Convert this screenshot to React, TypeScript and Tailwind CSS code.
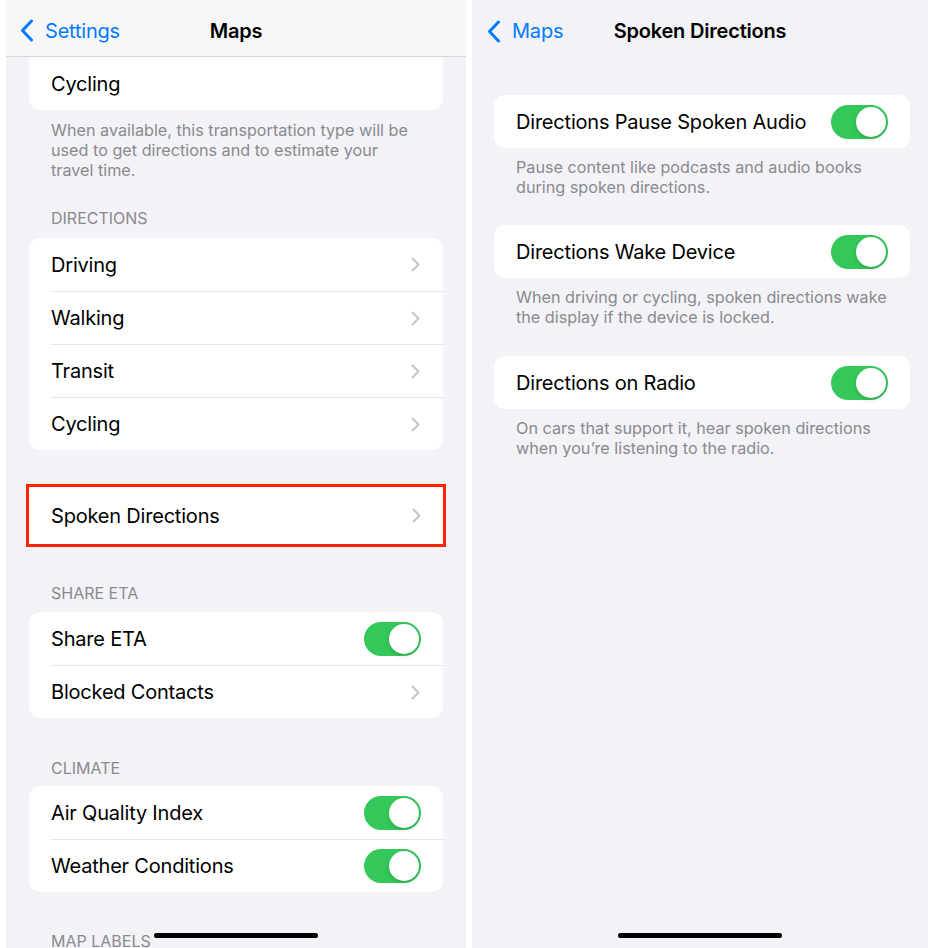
const font = { fontFamily: "Inter, 'Noto Sans', sans-serif" };

function Chevron() {
  return (
    <svg width="9" height="15" viewBox="0 0 9 15" fill="none" className="shrink-0">
      <path d="M1.5 1.5L7.5 7.5L1.5 13.5" stroke="#c4c4c7" strokeWidth="2" strokeLinecap="round" strokeLinejoin="round" />
    </svg>
  );
}

function BackChevron() {
  return (
    <svg width="14" height="23" viewBox="0 0 14 23" fill="none" className="shrink-0">
      <path d="M11.5 2L2.5 11.5L11.5 21" stroke="#007aff" strokeWidth="3" strokeLinecap="round" strokeLinejoin="round" />
    </svg>
  );
}

function Toggle() {
  return (
    <div className="flex h-[34px] w-[57px] shrink-0 items-center justify-end rounded-full bg-[#34c759] px-[2px]">
      <div className="h-[30px] w-[30px] rounded-full bg-white shadow-[0_2px_4px_rgba(0,0,0,0.15)]" />
    </div>
  );
}

type Row = { label: string; kind: "chevron" | "toggle" | "none" };

function Card({ rows, className = "" }: { rows: Row[]; className?: string }) {
  return (
    <div className={`overflow-hidden rounded-[11px] bg-white ${className}`}>
      {rows.map((r, i) => (
        <div key={r.label} className="pl-[22px]">
          <div
            className={`flex h-[53px] items-center justify-between pr-[22px] ${
              i > 0 ? "border-t border-[#e3e3e6]" : ""
            }`}
          >
            <span className="text-[20px] tracking-[-0.2px] text-black">{r.label}</span>
            {r.kind === "chevron" && (
              <span className="pr-[1px]">
                <Chevron />
              </span>
            )}
            {r.kind === "toggle" && <Toggle />}
          </div>
        </div>
      ))}
    </div>
  );
}

function Header({ text, className = "" }: { text: string; className?: string }) {
  return <div className={`px-[45px] text-[16px] leading-[20px] text-[#8a8a8e] ${className}`}>{text}</div>;
}

function Footer({ children, className = "" }: { children: React.ReactNode; className?: string }) {
  return <div className={`text-[16.2px] leading-[20px] text-[#8a8a8e] ${className}`}>{children}</div>;
}

function HomeBar() {
  return (
    <div className="absolute bottom-[10px] left-0 right-0 flex justify-center">
      <div className="h-[5px] w-[164px] rounded-full bg-black" />
    </div>
  );
}

function MapsScreen() {
  return (
    <div className="relative h-[948px] w-[460px] shrink-0 overflow-hidden bg-[#f2f2f7]">
      <div className="relative flex h-[57px] items-center border-b border-[#d6d6d9] bg-[#f7f7f8] pt-[5px]">
        <div className="flex items-center gap-[11px] pl-[14px]">
          <BackChevron />
          <span className="text-[20px] tracking-[-0.2px] text-[#007aff]">Settings</span>
        </div>
        <div className="absolute inset-0 flex items-center justify-center pt-[5px]">
          <span className="text-[20px] font-semibold tracking-[-0.2px] text-black">Maps</span>
        </div>
      </div>

      <div className="mx-[23px] flex h-[53px] items-center rounded-b-[11px] bg-white pl-[22px]">
        <span className="text-[20px] tracking-[-0.2px] text-black">Cycling</span>
      </div>
      <Footer className="px-[45px] pt-[10px]">
        When available, this transportation type will be used to get directions and to estimate your travel time.
      </Footer>

      <Header text="DIRECTIONS" className="mt-[28px]" />
      <Card
        className="mx-[23px] mt-[10px]"
        rows={[
          { label: "Driving", kind: "chevron" },
          { label: "Walking", kind: "chevron" },
          { label: "Transit", kind: "chevron" },
          { label: "Cycling", kind: "chevron" },
        ]}
      />

      <div className="mx-[20px] mt-[34px] flex h-[63px] items-center justify-between border-[3px] border-[#ff2200] bg-white pl-[22px] pr-[22px]">
        <span className="text-[20px] tracking-[-0.2px] text-black">Spoken Directions</span>
        <Chevron />
      </div>

      <Header text="SHARE ETA" className="mt-[36px]" />
      <Card
        className="mx-[23px] mt-[9px]"
        rows={[
          { label: "Share ETA", kind: "toggle" },
          { label: "Blocked Contacts", kind: "chevron" },
        ]}
      />

      <Header text="CLIMATE" className="mt-[40px]" />
      <Card
        className="mx-[23px] mt-[8px]"
        rows={[
          { label: "Air Quality Index", kind: "toggle" },
          { label: "Weather Conditions", kind: "toggle" },
        ]}
      />

      <Header text="MAP LABELS" className="mt-[39px]" />
      <HomeBar />
    </div>
  );
}

function SpokenScreen() {
  return (
    <div className="relative h-[948px] w-[456px] shrink-0 overflow-hidden bg-[#f2f2f7]">
      <div className="relative flex h-[57px] items-center pt-[5px]">
        <div className="flex items-center gap-[11px] pl-[15px]">
          <BackChevron />
          <span className="text-[20px] tracking-[-0.2px] text-[#007aff]">Maps</span>
        </div>
        <div className="absolute inset-0 flex items-center justify-center pt-[5px]">
          <span className="text-[20px] font-semibold tracking-[-0.2px] text-black">Spoken Directions</span>
        </div>
      </div>

      <Card className="ml-[22px] mr-[18px] mt-[38px]" rows={[{ label: "Directions Pause Spoken Audio", kind: "toggle" }]} />
      <Footer className="pl-[44px] pr-[40px] pt-[9px]">
        Pause content like podcasts and audio books during spoken directions.
      </Footer>

      <Card className="ml-[22px] mr-[18px] mt-[28px]" rows={[{ label: "Directions Wake Device", kind: "toggle" }]} />
      <Footer className="pl-[44px] pr-[40px] pt-[9px]">
        When driving or cycling, spoken directions wake the display if the device is locked.
      </Footer>

      <Card className="ml-[22px] mr-[18px] mt-[29px]" rows={[{ label: "Directions on Radio", kind: "toggle" }]} />
      <Footer className="pl-[44px] pr-[40px] pt-[9px]">
        On cars that support it, hear spoken directions when you’re listening to the radio.
      </Footer>
      <HomeBar />
    </div>
  );
}

export default function App() {
  return (
    <div className="flex h-[948px] w-[928px] overflow-hidden bg-white" style={font}>
      <div className="w-[6px] shrink-0" />
      <MapsScreen />
      <div className="w-[6px] shrink-0" />
      <SpokenScreen />
    </div>
  );
}
